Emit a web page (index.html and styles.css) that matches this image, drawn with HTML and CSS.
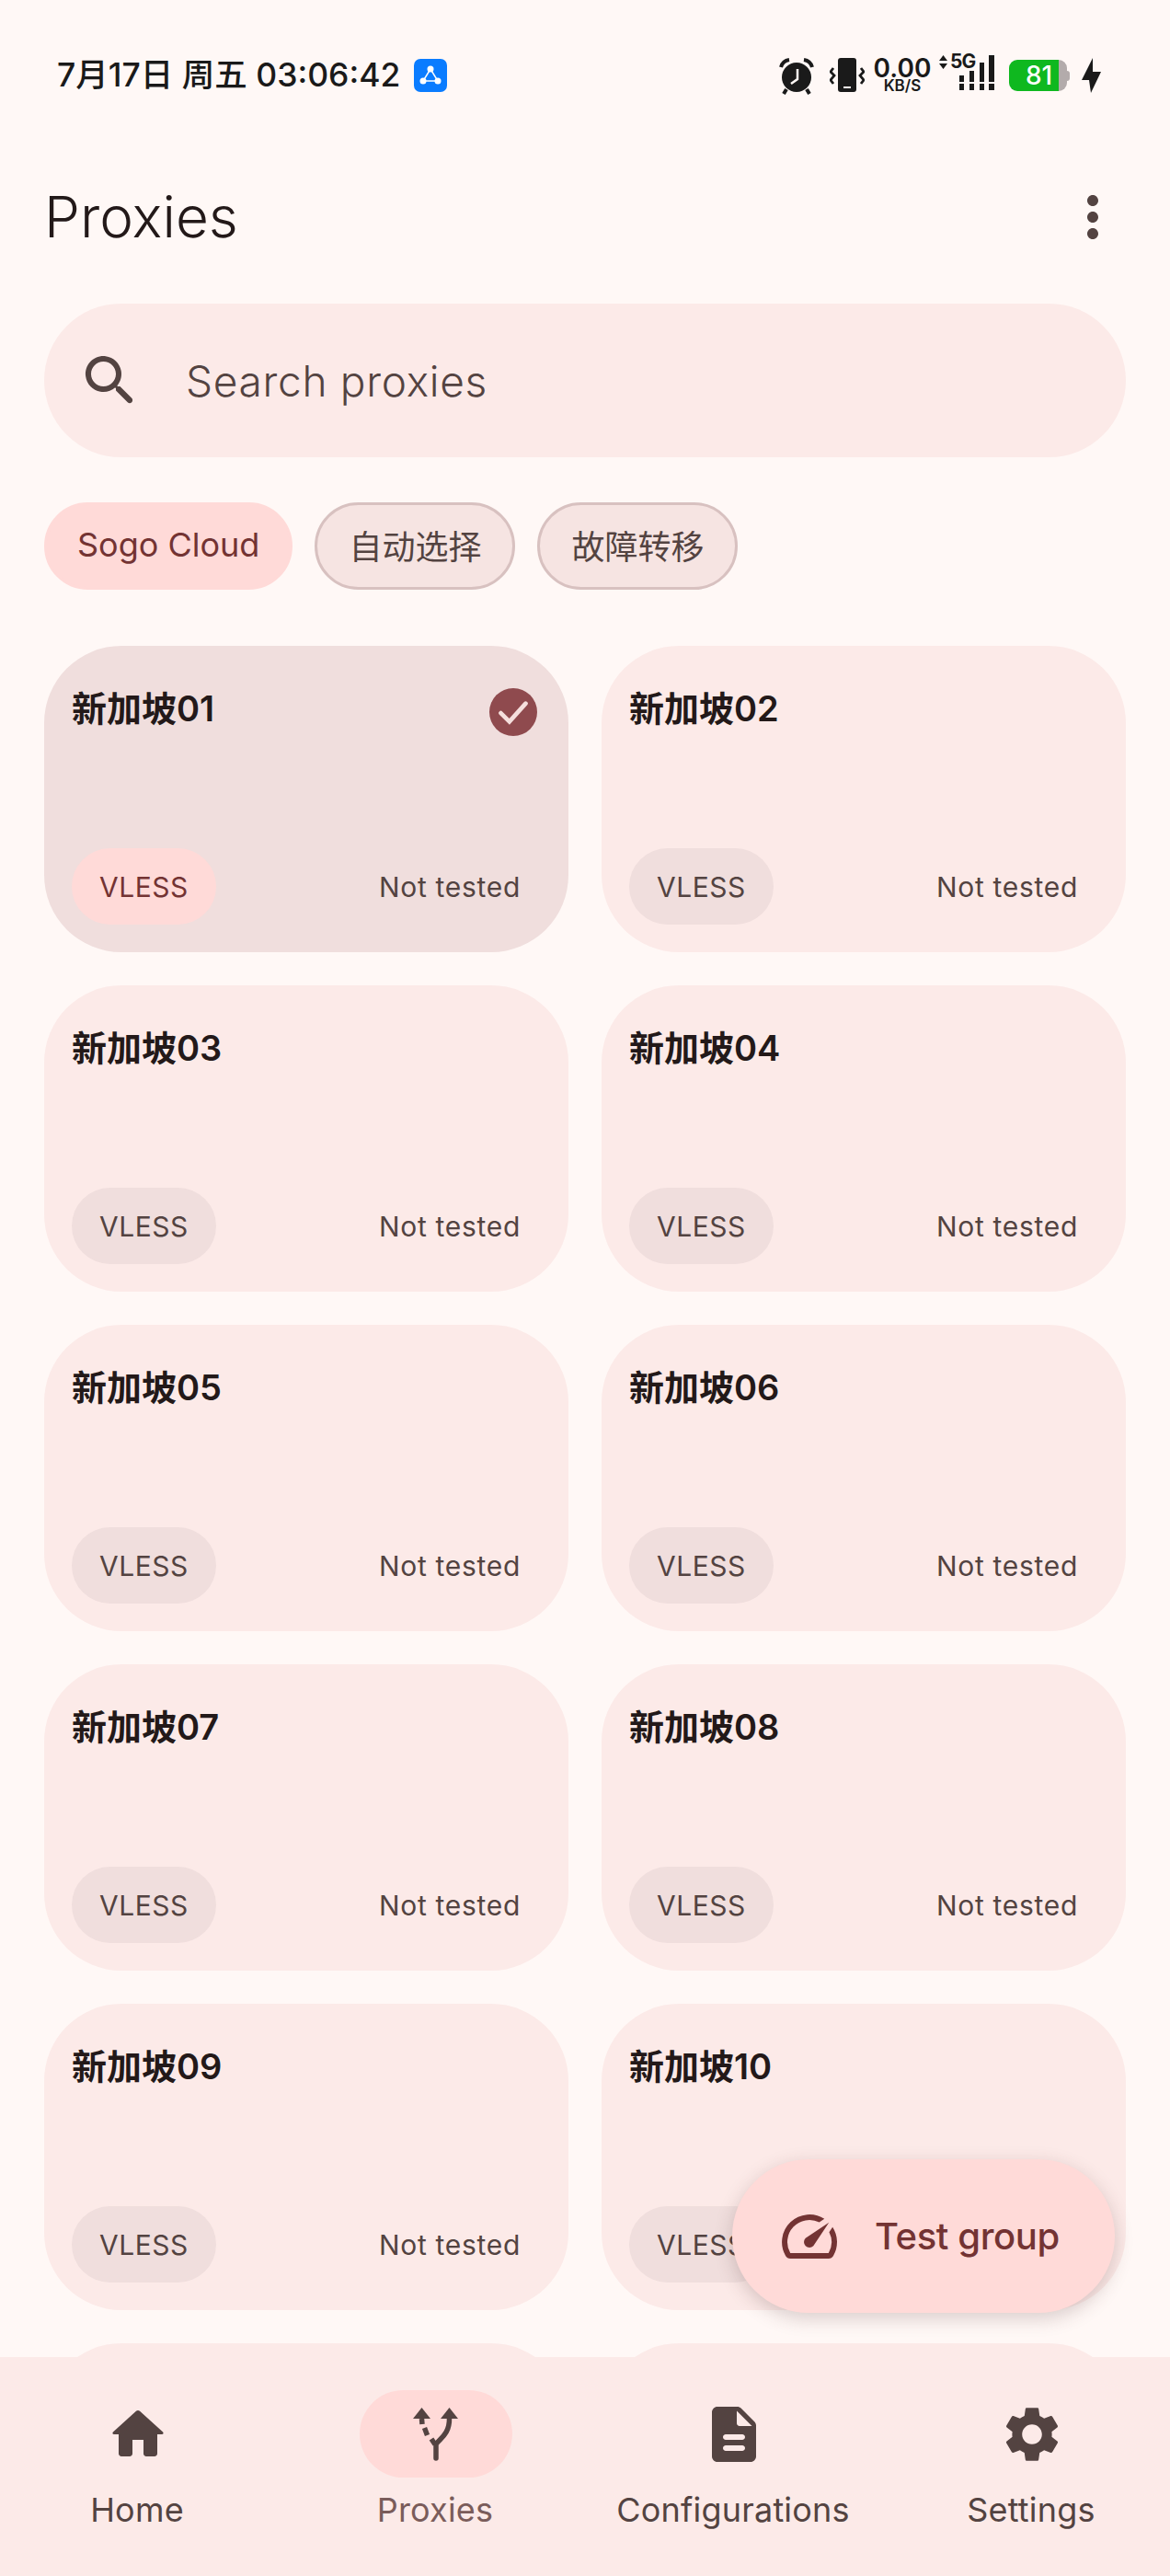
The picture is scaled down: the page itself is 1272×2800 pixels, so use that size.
FILE: index.html
```html
<!DOCTYPE html>
<html lang="zh">
<head>
    <meta charset="UTF-8">
    <meta name="viewport" content="width=device-width, initial-scale=1.0">
    <title>Proxies</title>
    <link rel="stylesheet" href="styles.css">
</head>
<body>
    <div class="app">
        <div class="status-bar">
            <div class="status-left">
                <span class="clock">7月17日 周五 03:06:42</span>
                <span class="vpn-badge">
                    <svg width="36" height="36" viewBox="0 0 36 36"><path d="M18 11L10 24H26Z" fill="none" stroke="#fff" stroke-width="1.500"/><circle cx="18" cy="11" r="3.500" fill="#fff"/><circle cx="10" cy="24" r="3.500" fill="#fff"/><circle cx="26" cy="24" r="3.500" fill="#fff"/></svg>
                </span>
            </div>
            <div class="status-right">
                <svg class="st-alarm" width="38" height="40" viewBox="0 0 38 40"><circle cx="19" cy="21" r="16" fill="#1a1a1a"/><path d="M2 10Q4 3 11 2" fill="none" stroke="#1a1a1a" stroke-width="4"/><path d="M36 10Q34 3 27 2" fill="none" stroke="#1a1a1a" stroke-width="4"/><path d="M8 34L5 39M30 34L33 39" stroke="#1a1a1a" stroke-width="4"/><path d="M20 12V23L13 28" fill="none" stroke="#fff8f6" stroke-width="2.500"/></svg>
                <svg class="st-vibrate" width="38" height="38" viewBox="0 0 38 38"><rect x="9" y="0" width="20" height="37" rx="3" fill="#1a1a1a"/><rect x="15" y="31" width="8" height="2" fill="#fff8f6"/><path d="M4 11L1 15L5 19L1 24L4 28M34 11L37 15L33 19L37 24L34 28" fill="none" stroke="#1a1a1a" stroke-width="2.800"/></svg>
                <div class="net-speed"><span class="net-value">0.00</span><span class="net-unit">KB/S</span></div>
                <div class="signal">
                    <svg width="9" height="15" viewBox="0 0 9 15"><path d="M4.500 0L9 6H0ZM0 9H9L4.500 15Z" fill="#1a1a1a"/></svg>
                    <span class="net-type">5G</span>
                    <svg class="bars" width="38" height="38" viewBox="0 0 38 38"><path d="M0 22H5V29H0ZM0 31H5V38H0ZM11 17H16V29H11ZM11 31H16V38H11ZM22 8H27V29H22ZM22 31H27V38H22ZM32 0H38V29H32ZM32 31H38V38H32Z" fill="#1a1a1a"/></svg>
                </div>
                <div class="battery"><div class="battery-body"><span>81</span></div><div class="battery-tip"></div></div>
                <svg class="st-bolt" width="21" height="38" viewBox="0 0 21 38"><path d="M12 0L0 24H8L10 38L21 15H12Z" fill="#1a1a1a"/></svg>
            </div>
        </div>

        <div class="header">
            <h1>Proxies</h1>
            <svg class="icon" viewBox="0 0 24 24"><path d="M12 8c1.100 0 2-.9 2-2s-.9-2-2-2-2 .9-2 2 .9 2 2 2zm0 2c-1.100 0-2 .9-2 2s.9 2 2 2 2-.9 2-2-.9-2-2-2zm0 6c-1.100 0-2 .9-2 2s.9 2 2 2 2-.9 2-2-.9-2-2-2z"/></svg>
        </div>

        <div class="search">
            <svg class="icon" viewBox="0 0 24 24"><path d="M15.500 14h-.79l-.28-.27c1.200-1.400 1.820-3.310 1.480-5.340-.47-2.780-2.790-5-5.590-5.340-4.230-.52-7.790 3.040-7.270 7.270.34 2.800 2.560 5.120 5.340 5.590 2.030.34 3.940-.28 5.340-1.480l.27.28v.79l4.250 4.250c.41.41 1.080.41 1.490 0 .41-.41.41-1.080 0-1.490L15.500 14zm-6 0C7.010 14 5 11.990 5 9.500S7.010 5 9.500 5 14 7.010 14 9.500 11.990 14 9.500 14z"/></svg>
            <span>Search proxies</span>
        </div>

        <div class="chips">
            <div class="chip chip-active">Sogo Cloud</div>
            <div class="chip">自动选择</div>
            <div class="chip">故障转移</div>
        </div>

        <div class="list">
            <div class="card card-selected">
                <div class="card-top">
                    <span class="card-name">新加坡01</span>
                    <svg class="check" width="52" height="52" viewBox="0 0 50 50"><circle cx="25" cy="25" r="25" fill="#8f4a4e"/><path d="M12 26L21 35L38 16" fill="none" stroke="#f5dfdd" stroke-width="4.500" stroke-linecap="round"/></svg>
                </div>
                <div class="card-bottom"><span class="tag">VLESS</span><span class="delay">Not tested</span></div>
            </div>
            <div class="card">
                <div class="card-top"><span class="card-name">新加坡02</span></div>
                <div class="card-bottom"><span class="tag">VLESS</span><span class="delay">Not tested</span></div>
            </div>
            <div class="card">
                <div class="card-top"><span class="card-name">新加坡03</span></div>
                <div class="card-bottom"><span class="tag">VLESS</span><span class="delay">Not tested</span></div>
            </div>
            <div class="card">
                <div class="card-top"><span class="card-name">新加坡04</span></div>
                <div class="card-bottom"><span class="tag">VLESS</span><span class="delay">Not tested</span></div>
            </div>
            <div class="card">
                <div class="card-top"><span class="card-name">新加坡05</span></div>
                <div class="card-bottom"><span class="tag">VLESS</span><span class="delay">Not tested</span></div>
            </div>
            <div class="card">
                <div class="card-top"><span class="card-name">新加坡06</span></div>
                <div class="card-bottom"><span class="tag">VLESS</span><span class="delay">Not tested</span></div>
            </div>
            <div class="card">
                <div class="card-top"><span class="card-name">新加坡07</span></div>
                <div class="card-bottom"><span class="tag">VLESS</span><span class="delay">Not tested</span></div>
            </div>
            <div class="card">
                <div class="card-top"><span class="card-name">新加坡08</span></div>
                <div class="card-bottom"><span class="tag">VLESS</span><span class="delay">Not tested</span></div>
            </div>
            <div class="card">
                <div class="card-top"><span class="card-name">新加坡09</span></div>
                <div class="card-bottom"><span class="tag">VLESS</span><span class="delay">Not tested</span></div>
            </div>
            <div class="card">
                <div class="card-top"><span class="card-name">新加坡10</span></div>
                <div class="card-bottom"><span class="tag">VLESS</span><span class="delay">Not tested</span></div>
            </div>
            <div class="card"></div>
            <div class="card"></div>
        </div>

        <div class="fab">
            <svg class="icon" viewBox="0 0 24 24"><path d="M20.380 8.570l-1.230 1.850a8 8 0 0 1-.22 7.580H5.070A8 8 0 0 1 15.580 6.850l1.850-1.230A10 10 0 0 0 3.350 19a2 2 0 0 0 1.720 1h13.850a2 2 0 0 0 1.740-1 10 10 0 0 0-.27-10.440z"/><path d="M10.590 15.410a2 2 0 0 0 2.830 0l5.660-8.490-8.490 5.660a2 2 0 0 0 0 2.830z"/></svg>
            <span>Test group</span>
        </div>

        <div class="nav">
            <div class="nav-item">
                <div class="nav-icon">
                    <svg class="icon" viewBox="0 0 24 24"><path d="M10 19v-5h4v5c0 .55.45 1 1 1h3c.55 0 1-.45 1-1v-7h1.700c.46 0 .68-.57.33-.87L12.670 3.600c-.38-.34-.96-.34-1.340 0l-8.360 7.530c-.34.3-.13.87.33.87H5v7c0 .55.45 1 1 1h3c.55 0 1-.45 1-1z"/></svg>
                </div>
                <span class="nav-label">Home</span>
            </div>
            <div class="nav-item nav-item-active">
                <div class="nav-icon">
                    <svg class="icon" viewBox="0 0 72 72"><path d="M36 62V47C39 41 51 37 50.500 18" fill="none" stroke="#534341" stroke-width="5.500" stroke-linecap="round"/><path d="M50.500 7L60 19H41Z"/><path d="M20.500 7L30 19H11Z"/><path d="M20.500 19L21 25" fill="none" stroke="#534341" stroke-width="5.500"/><path d="M23.500 29L26.500 37" fill="none" stroke="#534341" stroke-width="5.500"/><path d="M31 41L35 47" fill="none" stroke="#534341" stroke-width="5.500"/></svg>
                </div>
                <span class="nav-label">Proxies</span>
            </div>
            <div class="nav-item">
                <div class="nav-icon">
                    <svg class="icon" viewBox="0 0 24 24"><path d="M14.590 2.590c-.38-.38-.89-.59-1.420-.59H6c-1.100 0-2 .9-2 2v16c0 1.100.89 2 1.990 2H18c1.100 0 2-.9 2-2V8.830c0-.53-.21-1.040-.59-1.410l-4.820-4.830zM15 18H9c-.55 0-1-.45-1-1s.45-1 1-1h6c.55 0 1 .45 1 1s-.45 1-1 1zm0-4H9c-.55 0-1-.45-1-1s.45-1 1-1h6c.55 0 1 .45 1 1s-.45 1-1 1zm-2-6V3.500L18.500 9H14c-.55 0-1-.45-1-1z"/></svg>
                </div>
                <span class="nav-label">Configurations</span>
            </div>
            <div class="nav-item">
                <div class="nav-icon">
                    <svg class="icon" viewBox="0 0 24 24"><path d="M19.140 12.940c.04-.3.06-.61.06-.94 0-.32-.02-.64-.07-.94l2.030-1.580c.18-.14.23-.41.12-.61l-1.920-3.320c-.12-.22-.37-.29-.59-.22l-2.390.96c-.5-.38-1.030-.7-1.620-.94l-.36-2.540c-.04-.24-.24-.41-.48-.41h-3.840c-.24 0-.43.17-.47.41l-.36 2.540c-.59.24-1.130.57-1.620.94l-2.390-.96c-.22-.08-.47 0-.59.22L2.740 8.870c-.12.21-.08.47.12.61l2.030 1.580c-.05.3-.09.63-.09.94s.02.64.07.94l-2.030 1.580c-.18.14-.23.41-.12.61l1.920 3.320c.12.22.37.29.59.22l2.390-.96c.5.38 1.030.7 1.620.94l.36 2.540c.05.24.24.41.48.41h3.840c.24 0 .44-.17.47-.41l.36-2.540c.59-.24 1.130-.56 1.620-.94l2.390.96c.22.08.47 0 .59-.22l1.920-3.320c.12-.22.07-.47-.12-.61l-2.010-1.580zM12 15.600c-1.980 0-3.600-1.620-3.600-3.600s1.620-3.600 3.600-3.600 3.600 1.620 3.600 3.600-1.620 3.600-3.600 3.600z"/></svg>
                </div>
                <span class="nav-label">Settings</span>
            </div>
        </div>
    </div>
</body>
</html>
```

FILE: styles.css
```css
body {
    margin: 0;
    font-family: Inter, "Noto Sans CJK SC", sans-serif;
    background-color: #fff8f6;
    color: #534341;
}

.app {
    position: relative;
    width: 1272px;
    height: 2800px;
    display: flex;
    flex-direction: column;
    overflow: hidden;
}

.icon {
    width: 72px;
    height: 72px;
    fill: currentColor;
    flex-shrink: 0;
}

/* status bar */
.status-bar {
    height: 146px;
    padding: 63px 75px 0 62px;
    box-sizing: border-box;
    display: flex;
    justify-content: space-between;
    align-items: flex-start;
    color: #1a1a1a;
}

.status-left {
    display: flex;
    align-items: center;
    gap: 15px;
}

.clock {
    font-size: 35.500px;
    font-weight: 500;
    line-height: 38px;
}

.vpn-badge {
    width: 36px;
    height: 36px;
    border-radius: 7px;
    background-color: #0a7cff;
    display: block;
}

.status-right {
    display: flex;
    align-items: flex-start;
}

.st-vibrate {
    margin-left: 17px;
}

.net-speed {
    margin-left: 11px;
    width: 60px;
    display: flex;
    flex-direction: column;
    align-items: center;
    font-weight: 600;
}

.net-value {
    font-size: 28px;
    line-height: 22px;
}

.net-unit {
    font-size: 17px;
    line-height: 15px;
    margin-top: 1px;
}

.signal {
    position: relative;
    width: 60px;
    height: 40px;
    margin-left: 10px;
    margin-top: -3px;
}

.signal svg {
    position: absolute;
    left: 0;
    top: 0;
}

.signal .bars {
    left: 22px;
    top: 0;
}

.net-type {
    position: absolute;
    left: 12px;
    top: -2px;
    font-size: 21px;
    line-height: 18px;
    font-weight: 700;
    letter-spacing: -1px;
}

.battery {
    margin-left: 16px;
    margin-top: 2px;
    display: flex;
    align-items: center;
}

.battery-body {
    width: 63px;
    height: 34px;
    border-radius: 9px;
    box-sizing: border-box;
    background: linear-gradient(to right, #0fb81f 54px, #b3abab 54px);
    color: #fff;
    font-size: 28px;
    font-weight: 500;
    line-height: 34px;
    padding-left: 18px;
}

.battery-tip {
    width: 3px;
    height: 11px;
    border-radius: 0 3px 3px 0;
    background-color: #b3abab;
}

.st-bolt {
    margin-left: 13px;
}

/* title and search */
.header {
    height: 180px;
    padding: 0 48px;
    display: flex;
    justify-content: space-between;
    align-items: center;
    flex-shrink: 0;
}

.header h1 {
    margin: -2px 0 0;
    font-size: 62px;
    font-weight: 300;
    color: #231919;
}

.search {
    margin: 4px 48px 0;
    height: 167px;
    padding-left: 36px;
    border-radius: 84px;
    background-color: #fceae8;
    display: flex;
    align-items: center;
    gap: 46px;
    font-size: 46px;
    font-weight: 350;
    letter-spacing: 0.700px;
    flex-shrink: 0;
}

.chips {
    margin: 49px 48px 0;
    display: flex;
    gap: 24px;
    flex-shrink: 0;
}

.chip {
    height: 95px;
    padding: 0 34px 3px;
    box-sizing: border-box;
    border-radius: 48px;
    border: 3px solid #d8c1c0;
    background-color: #f6e4e2;
    display: flex;
    align-items: center;
    font-size: 36px;
}

.chip-active {
    padding: 0 33px 3px;
    border-color: #ffdad8;
    background-color: #ffdad8;
    color: #733333;
}

/* proxy cards */
.list {
    flex: 1;
    min-height: 0;
    margin-top: 61px;
    padding: 0 48px;
    display: grid;
    grid-template-columns: repeat(2, 1fr);
    grid-auto-rows: 333px;
    gap: 36px;
    overflow: hidden;
}

.card {
    padding: 50px 52px 30px 30px;
    box-sizing: border-box;
    border-radius: 84px;
    background-color: #fceae8;
    display: flex;
    flex-direction: column;
    justify-content: space-between;
}

.card-selected {
    background-color: #f0dedd;
}

.card-top {
    display: flex;
    justify-content: space-between;
    align-items: flex-start;
}

.card-name {
    font-size: 38px;
    font-weight: 600;
    line-height: 36px;
    color: #231919;
}

.check {
    margin: -4px -18px 0 0;
}

.card-bottom {
    display: flex;
    justify-content: space-between;
    align-items: center;
}

.tag {
    height: 83px;
    padding: 0 30px;
    border-radius: 42px;
    background-color: #f0dedd;
    display: flex;
    align-items: center;
    font-size: 30px;
    letter-spacing: 0.500px;
}

.card-selected .tag {
    background-color: #ffdad8;
    color: #733333;
}

.delay {
    font-size: 30px;
    letter-spacing: 0.700px;
}

/* floating button */
.fab {
    position: absolute;
    left: 796px;
    top: 2347px;
    width: 416px;
    height: 167px;
    padding-left: 48px;
    box-sizing: border-box;
    border-radius: 84px;
    background-color: #ffdad8;
    color: #733333;
    display: flex;
    align-items: center;
    gap: 35px;
    font-size: 40px;
    font-weight: 450;
    letter-spacing: -0.400px;
    box-shadow: 0 6px 20px rgba(80, 50, 50, 0.22);
}

/* bottom navigation */
.nav {
    height: 238px;
    background-color: #fceae8;
    display: grid;
    grid-template-columns: repeat(4, 324px);
    justify-content: center;
    flex-shrink: 0;
    position: relative;
}

.nav-item {
    display: flex;
    flex-direction: column;
    align-items: center;
    padding-top: 36px;
}

.nav-icon {
    width: 166px;
    height: 95px;
    border-radius: 48px;
    display: flex;
    align-items: center;
    justify-content: center;
}

.nav-item-active .nav-icon {
    background-color: #ffdad8;
}

.nav-label {
    margin: 14px 2px 0 0;
    font-size: 36px;
    line-height: 42px;
    letter-spacing: 0.200px;
}

.nav-item-active .nav-label {
    color: #7a5c5a;
}
```
